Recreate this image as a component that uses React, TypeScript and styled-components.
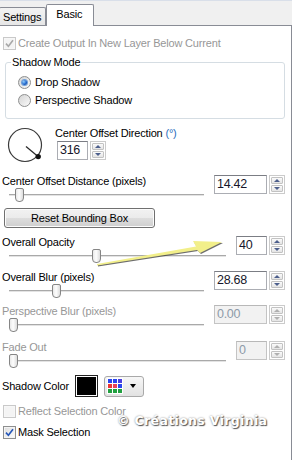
import styled, { createGlobalStyle } from 'styled-components'

const GlobalStyle = createGlobalStyle`
  html, body {
    margin: 0;
    padding: 0;
    background: #f0f0f0;
  }
  body {
    font-family: 'Liberation Sans', Arial, sans-serif;
    font-size: 11px;
    letter-spacing: -0.18px;
    color: #000;
  }
`

const Window = styled.div`
  position: relative;
  width: 292px;
  height: 460px;
  overflow: hidden;
  box-sizing: border-box;
  border-top: 1px solid #d9dfe9;
  background: #f0f0f0;
  display: flex;
  flex-direction: column;
`

const TabStrip = styled.div`
  height: 24px;
  display: flex;
  align-items: flex-end;
  margin-left: -1px;
`

const Tab = styled.div<{ $active?: boolean }>`
  position: relative;
  z-index: ${p => (p.$active ? 2 : 1)};
  box-sizing: border-box;
  border: 1px solid #898c95;
  border-bottom: none;
  border-radius: 2px 2px 0 0;
  height: ${p => (p.$active ? '22px' : '18px')};
  margin-bottom: ${p => (p.$active ? '-1px' : '0')};
  padding: ${p => (p.$active ? '3px 11px 0 9px' : '3px 4px 0 3px')};
  line-height: 12px;
  background: ${p =>
    p.$active ? '#fff' : 'linear-gradient(#f3f3f3, #e6e6e6)'};
`

const Panel = styled.div`
  flex: 1;
  background: #fff;
  border-top: 1px solid #898c95;
  border-right: 1px solid #898c95;
  padding-right: 6px;
  display: flex;
  flex-direction: column;
`

const CheckRow = styled.div<{ $top: number }>`
  display: flex;
  align-items: center;
  gap: 2px;
  height: 14px;
  margin-top: ${p => p.$top}px;
  padding-left: 3px;
`

const Box = styled.span<{ $disabled?: boolean }>`
  box-sizing: border-box;
  width: 13px;
  height: 13px;
  flex: none;
  display: flex;
  align-items: center;
  justify-content: center;
  border: 1px solid ${p => (p.$disabled ? '#c9c9c9' : '#8e8f8f')};
  background: ${p =>
    p.$disabled ? '#f4f4f4' : 'linear-gradient(135deg, #dcdcdc, #fdfdfd)'};
  box-shadow: inset 0 0 0 1px ${p => (p.$disabled ? '#f7f7f7' : '#f4f4f4')};
`

const Text = styled.span<{ $disabled?: boolean }>`
  white-space: nowrap;
  line-height: 14px;
  color: ${p => (p.$disabled ? '#979797' : '#000')};
`

const GroupBox = styled.fieldset`
  margin: 6px 0 0 5px;
  padding: 0;
  border: 1px solid #d5dde3;
  border-radius: 3px;
  min-width: 0;
`

const Legend = styled.legend`
  margin-left: 5px;
  padding: 0 1px;
  line-height: 12px;
`

const RadioList = styled.div`
  display: flex;
  flex-direction: column;
  padding: 5px 0 9px 12px;
`

const RadioRow = styled.div`
  display: flex;
  align-items: center;
  gap: 4px;
  height: 18px;
`

const RadioDot = styled.span<{ $checked?: boolean }>`
  box-sizing: border-box;
  width: 13px;
  height: 13px;
  border-radius: 50%;
  border: 1px solid #8e8f8f;
  background: linear-gradient(135deg, #d4d4d4, #fafafa);
  display: flex;
  align-items: center;
  justify-content: center;

  &::after {
    content: '';
    display: ${p => (p.$checked ? 'block' : 'none')};
    width: 5px;
    height: 5px;
    border-radius: 50%;
    background: radial-gradient(circle at 35% 35%, #8fd0ff, #1a5fc8 60%, #0c3c8c);
    box-shadow: 0 0 0 1px #6f9fd8;
  }
`

const DialRow = styled.div`
  display: flex;
  align-items: flex-start;
  gap: 12px;
  margin-top: 8px;
  padding-left: 7px;
  height: 36px;
`

const DialFields = styled.div`
  display: flex;
  flex-direction: column;
  gap: 2px;
`

const FieldLabel = styled.div<{ $disabled?: boolean }>`
  line-height: 12px;
  white-space: nowrap;
  color: ${p => (p.$disabled ? '#979797' : '#000')};
`

const Unit = styled.span`
  color: #2a6ebd;
`

const SpinBox = styled.div<{ $top?: number }>`
  display: flex;
  gap: 2px;
  height: 19px;
  margin-left: ${p => (p.$top === undefined ? '2px' : '0')};
  margin-top: ${p => p.$top ?? 0}px;
  grid-column: 2;
  grid-row: 1 / span 2;
  align-self: start;
`

const SpinInput = styled.div<{ $w: number; $disabled?: boolean }>`
  box-sizing: border-box;
  width: ${p => p.$w}px;
  height: 19px;
  padding: 0 2px;
  border: 1px solid ${p => (p.$disabled ? '#c4c4c4' : '#abadb3')};
  border-top-color: ${p => (p.$disabled ? '#b8b8b8' : '#7b7d84')};
  background: ${p => (p.$disabled ? '#f2f2f2' : '#fff')};
  color: ${p => (p.$disabled ? '#8d9aa8' : '#16162a')};
  font-size: 12.5px;
  line-height: 17px;
  letter-spacing: -0.3px;
`

const SpinButtons = styled.div`
  box-sizing: border-box;
  width: 16px;
  height: 19px;
  border: 1px solid #cbcbcb;
  padding: 1px;
  display: flex;
  flex-direction: column;
  gap: 1px;
`

const SpinBtn = styled.div<{ $disabled?: boolean }>`
  flex: 1;
  box-sizing: border-box;
  border: 1px solid #c2c2c2;
  border-radius: 1px;
  background: linear-gradient(#fbfbfb, #e4e4e4);
  display: flex;
  align-items: center;
  justify-content: center;
  color: ${p => (p.$disabled ? '#b0b0b0' : '#4d5f8c')};
`

const Tri = styled.span<{ $up?: boolean }>`
  width: 0;
  height: 0;
  border-left: 3px solid transparent;
  border-right: 3px solid transparent;
  ${p =>
    p.$up
      ? 'border-bottom: 3px solid currentColor;'
      : 'border-top: 3px solid currentColor;'}
`

const Block = styled.div<{ $top: number }>`
  display: grid;
  grid-template-columns: 1fr auto;
  grid-template-rows: 14px 14px;
  margin-top: ${p => p.$top}px;
  padding-left: 2px;
`

const BlockLabel = styled(FieldLabel)`
  grid-column: 1;
  grid-row: 1;
  line-height: 14px;
`

const Track = styled.div`
  grid-column: 1;
  grid-row: 2;
  position: relative;
  margin: 0 10px 0 7px;

  &::before {
    content: '';
    position: absolute;
    left: 0;
    right: 0;
    top: 6px;
    height: 1px;
    background: #a9a9a9;
    border-bottom: 1px solid #e3e3e3;
  }
`

const Thumb = styled.span<{ $at: number }>`
  position: absolute;
  top: 0;
  left: ${p => p.$at}px;
  box-sizing: border-box;
  width: 9px;
  height: 14px;
  border: 1px solid #858585;
  border-radius: 2px 2px 4px 4px;
  background: linear-gradient(90deg, #e9e9e9, #fdfdfd 45%, #dcdcdc);
`

const ResetButton = styled.div`
  box-sizing: border-box;
  width: 151px;
  height: 20px;
  margin: 6px 0 0 4px;
  border: 1px solid #707070;
  border-radius: 3px;
  background: linear-gradient(#f2f2f2 0%, #ebebeb 50%, #dddddd 51%, #cfcfcf 100%);
  box-shadow: inset 0 0 0 1px #fcfcfc;
  display: flex;
  align-items: center;
  justify-content: center;
`

const ColorRow = styled.div`
  display: flex;
  align-items: center;
  height: 22px;
  margin-top: 7px;
  padding-left: 2px;
`

const ColorLabel = styled.span`
  width: 73px;
  white-space: nowrap;
`

const Swatch = styled.span`
  box-sizing: border-box;
  width: 23px;
  height: 22px;
  border: 1px solid #222;
  background: #000;
  box-shadow: inset 0 0 0 1px #fff;
`

const ColorButton = styled.div`
  box-sizing: border-box;
  width: 40px;
  height: 21px;
  margin-left: 6px;
  border: 1px solid #a9a9a9;
  border-radius: 3px;
  background: linear-gradient(#f7f7f7, #e2e2e2);
  display: flex;
  align-items: center;
  gap: 7px;
  padding-left: 2px;
`

const Palette = styled.div`
  display: grid;
  grid-template-columns: repeat(3, 4px);
  grid-template-rows: repeat(3, 4px);
  gap: 1px;
  padding: 1px;
  background: #fff;
`

const Cell = styled.span<{ $c: string }>`
  background: ${p => p.$c};
`

const DropArrow = styled.span`
  width: 0;
  height: 0;
  border-left: 3.5px solid transparent;
  border-right: 3.5px solid transparent;
  border-top: 4px solid #000;
`

const Watermark = styled.div`
  position: absolute;
  left: 117px;
  top: 412px;
  font-family: 'DejaVu Sans', sans-serif;
  font-weight: bold;
  font-size: 12.5px;
  letter-spacing: 0.35px;
  color: #fff;
  text-shadow: 1px 1px 1px #555, 0 0 2px #888;
  white-space: nowrap;
`

const ArrowArt = styled.svg`
  position: absolute;
  left: 95px;
  top: 232px;
  filter: drop-shadow(1px 1.5px 0.6px rgba(60, 60, 60, 0.75));
`

const Check = ({ color }: { color: string }) => (
  <svg width="9" height="9" viewBox="0 0 9 9">
    <path d="M1 4.6 L3.4 7.2 L8 1.2" fill="none" stroke={color} strokeWidth="1.6" />
  </svg>
)

const CheckItem = ({
  label,
  checked,
  disabled,
  top,
}: {
  label: string
  checked?: boolean
  disabled?: boolean
  top: number
}) => (
  <CheckRow $top={top}>
    <Box $disabled={disabled}>
      {checked && <Check color={disabled ? '#a8a8a8' : '#2456b8'} />}
    </Box>
    <Text $disabled={disabled}>{label}</Text>
  </CheckRow>
)

const Spin = ({
  value,
  width,
  disabled,
  top,
}: {
  value: string
  width: number
  disabled?: boolean
  top?: number
}) => (
  <SpinBox $top={top}>
    <SpinInput $w={width} $disabled={disabled}>
      {value}
    </SpinInput>
    <SpinButtons>
      <SpinBtn $disabled={disabled}>
        <Tri $up />
      </SpinBtn>
      <SpinBtn $disabled={disabled}>
        <Tri />
      </SpinBtn>
    </SpinButtons>
  </SpinBox>
)

const SliderBlock = ({
  label,
  value,
  width,
  thumb,
  top,
  disabled,
}: {
  label: string
  value: string
  width: number
  thumb: number
  top: number
  disabled?: boolean
}) => (
  <Block $top={top}>
    <BlockLabel $disabled={disabled}>{label}</BlockLabel>
    <Track>
      <Thumb $at={thumb} />
    </Track>
    <Spin value={value} width={width} disabled={disabled} top={1} />
  </Block>
)

const Dial = () => (
  <svg width="36" height="36" viewBox="0 0 36 36">
    <circle cx="18" cy="18" r="16.5" fill="none" stroke="#3a3a3a" strokeWidth="1.2" />
    <line x1="19" y1="19.5" x2="31" y2="29.4" stroke="#2a2a2a" strokeWidth="1.3" />
    <circle cx="31.2" cy="29.6" r="2.7" fill="#111" />
  </svg>
)

const palette = [
  '#2a46ee', '#2a46ee', '#4a3ee0',
  '#ee3434', '#e8425a', '#2a46ee',
  '#22a040', '#22a040', '#22a040',
]

const App = () => (
  <Window>
    <GlobalStyle />
    <TabStrip>
      <Tab>Settings</Tab>
      <Tab $active>Basic</Tab>
    </TabStrip>
    <Panel>
      <CheckItem label="Create Output In New Layer Below Current" checked disabled top={10} />
      <GroupBox>
        <Legend>Shadow Mode</Legend>
        <RadioList>
          <RadioRow>
            <RadioDot $checked />
            <Text>Drop Shadow</Text>
          </RadioRow>
          <RadioRow>
            <RadioDot />
            <Text>Perspective Shadow</Text>
          </RadioRow>
        </RadioList>
      </GroupBox>
      <DialRow>
        <Dial />
        <DialFields>
          <FieldLabel>
            Center Offset Direction <Unit>(°)</Unit>
          </FieldLabel>
          <Spin value="316" width={31} />
        </DialFields>
      </DialRow>
      <SliderBlock label="Center Offset Distance (pixels)" value="14.42" width={53} thumb={6} top={11} />
      <ResetButton>Reset Bounding Box</ResetButton>
      <SliderBlock label="Overall Opacity" value="40" width={31} thumb={83} top={7} />
      <SliderBlock label="Overall Blur (pixels)" value="28.68" width={53} thumb={43} top={7} />
      <SliderBlock label="Perspective Blur (pixels)" value="0.00" width={53} thumb={0} top={6} disabled />
      <SliderBlock label="Fade Out" value="0" width={31} thumb={0} top={8} disabled />
      <ColorRow>
        <ColorLabel>Shadow Color</ColorLabel>
        <Swatch />
        <ColorButton>
          <Palette>
            {palette.map((c, i) => (
              <Cell key={i} $c={c} />
            ))}
          </Palette>
          <DropArrow />
        </ColorButton>
      </ColorRow>
      <CheckItem label="Reflect Selection Color" disabled top={7} />
      <CheckItem label="Mask Selection" checked top={7} />
    </Panel>
    <ArrowArt width="132" height="36" viewBox="0 0 132 36">
      <polygon points="2,31 101,13.5 98,8 127,9 105,20 102,17 2,32.5" fill="#f2ef8a" />
    </ArrowArt>
    <Watermark>© Créations Virginia</Watermark>
  </Window>
)

export default App
